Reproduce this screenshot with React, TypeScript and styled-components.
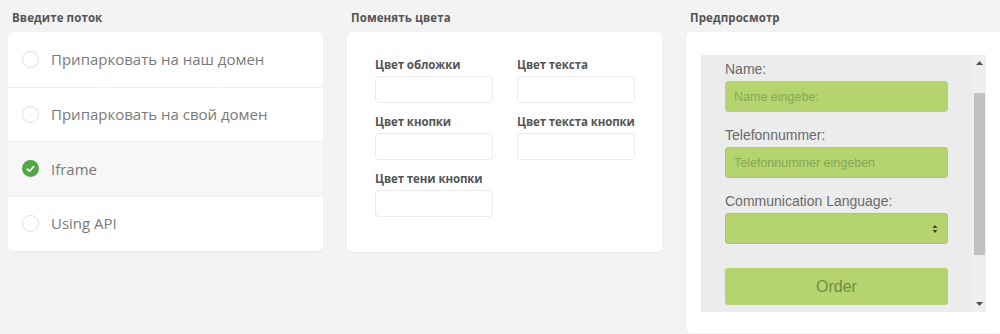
import React from "react";
import styled, { createGlobalStyle } from "styled-components";

const Global = createGlobalStyle`
  html, body { margin: 0; padding: 0; background: #f3f3f3; }
  body { font-family: "Open Sans", "Noto Sans", sans-serif; overflow: hidden; }
`;

const Page = styled.div`
  display: grid;
  grid-template-columns: 315px 315px 316px;
  column-gap: 24px;
  padding: 10px 0 0 8px;
  width: 1010px;
`;

const Column = styled.section`
  display: flex;
  flex-direction: column;
`;

const Heading = styled.h3`
  margin: 0 0 7px 4px;
  font-size: 11.5px;
  font-weight: 700;
  color: #555;
  line-height: 15px;
  letter-spacing: 0.1px;
`;

const Card = styled.div<{ $height: number }>`
  background: #fff;
  border-radius: 5px;
  height: ${(p) => p.$height}px;
  box-shadow: 0 1px 2px rgba(0, 0, 0, 0.05);
  box-sizing: border-box;
  overflow: hidden;
`;

const OptionList = styled.ul`
  list-style: none;
  margin: 0;
  padding: 0;
`;

const Option = styled.li<{ $active?: boolean }>`
  display: flex;
  align-items: center;
  gap: 12px;
  height: 54.5px;
  padding-left: 14px;
  box-sizing: border-box;
  background: ${(p) => (p.$active ? "#f7f7f7" : "#fff")};
  border-top: 1px solid #efefef;
  &:first-child { border-top: none; }
  font-size: 15px;
  color: #7a7a7a;
`;

const Radio = styled.span<{ $checked?: boolean }>`
  width: 17px;
  height: 17px;
  border-radius: 50%;
  box-sizing: border-box;
  border: ${(p) => (p.$checked ? "none" : "1.5px solid #dedede")};
  background: ${(p) => (p.$checked ? "#56a548" : "#fff")};
  display: flex;
  align-items: center;
  justify-content: center;
  flex-shrink: 0;
`;

const ColorGrid = styled.div`
  display: grid;
  grid-template-columns: 118px 118px;
  column-gap: 24px;
  row-gap: 11px;
  padding: 25px 0 0 28px;
`;

const Field = styled.label`
  display: flex;
  flex-direction: column;
  gap: 4px;
`;

const FieldLabel = styled.span`
  font-size: 11.5px;
  font-weight: 700;
  color: #555;
  line-height: 15px;
  white-space: nowrap;
  letter-spacing: -0.1px;
`;

const ColorInput = styled.div`
  height: 27px;
  border: 1px solid #ebebeb;
  border-radius: 4px;
  box-sizing: border-box;
  background: #fff;
`;

const PreviewFrame = styled.div`
  margin: 23px 0 0 15px;
  width: 285px;
  height: 257px;
  background: #ececec;
  display: flex;
`;

const FormBody = styled.div`
  flex: 1;
  padding: 6px 24px 0 24px;
  display: flex;
  flex-direction: column;
  font-family: "Liberation Sans", "Open Sans", sans-serif;
`;

const PLabel = styled.div`
  font-size: 14px;
  color: #6a6a6a;
  line-height: 17px;
  margin-bottom: 3px;
`;

const PInput = styled.div<{ $focus?: boolean }>`
  height: 31px;
  background: #b5d36f;
  border: 1px solid ${(p) => (p.$focus ? "#a9cfc0" : "#acc96a")};
  border-radius: 3px;
  box-sizing: border-box;
  display: flex;
  align-items: center;
  padding: 0 8px;
  font-size: 12.5px;
  color: #86a856;
  margin-bottom: 15px;
  position: relative;
`;

const SelectArrows = styled.span`
  position: absolute;
  right: 9px;
  top: 50%;
  transform: translateY(-50%);
  display: flex;
`;

const OrderButton = styled.div`
  margin-top: 9px;
  height: 37px;
  background: #b5d36f;
  border-radius: 3px;
  display: flex;
  align-items: center;
  justify-content: center;
  font-size: 16px;
  color: #6e8c45;
`;

const Scrollbar = styled.div`
  width: 14px;
  background: #efefef;
  display: flex;
  flex-direction: column;
  align-items: center;
`;

const ScrollArrow = styled.div`
  height: 16px;
  display: flex;
  align-items: center;
  justify-content: center;
`;

const Thumb = styled.div`
  width: 11px;
  height: 162px;
  margin-top: 22px;
  background: #c1c1c1;
`;

const Spacer = styled.div`
  flex: 1;
`;

const options = [
  "Припарковать на наш домен",
  "Припарковать на свой домен",
  "Iframe",
  "Using API",
];

const colorFields = [
  "Цвет обложки",
  "Цвет текста",
  "Цвет кнопки",
  "Цвет текста кнопки",
  "Цвет тени кнопки",
];

export default function App() {
  return (
    <>
      <Global />
      <Page>
        <Column>
          <Heading>Введите поток</Heading>
          <Card $height={219}>
            <OptionList>
              {options.map((o, i) => (
                <Option key={o} $active={i === 2}>
                  <Radio $checked={i === 2}>
                    {i === 2 && (
                      <svg width="9" height="8" viewBox="0 0 9 8">
                        <path d="M1.3 4.2 L3.5 6.2 L7.7 1.6" fill="none" stroke="#fff" strokeWidth="1.7" strokeLinecap="round" strokeLinejoin="round" />
                      </svg>
                    )}
                  </Radio>
                  {o}
                </Option>
              ))}
            </OptionList>
          </Card>
        </Column>
        <Column>
          <Heading>Поменять цвета</Heading>
          <Card $height={220}>
            <ColorGrid>
              {colorFields.map((f) => (
                <Field key={f}>
                  <FieldLabel>{f}</FieldLabel>
                  <ColorInput />
                </Field>
              ))}
            </ColorGrid>
          </Card>
        </Column>
        <Column>
          <Heading>Предпросмотр</Heading>
          <Card $height={301}>
            <PreviewFrame>
              <FormBody>
                <PLabel>Name:</PLabel>
                <PInput $focus>Name eingebe:</PInput>
                <PLabel>Telefonnummer:</PLabel>
                <PInput>Telefonnummer eingeben</PInput>
                <PLabel>Communication Language:</PLabel>
                <PInput>
                  <SelectArrows>
                    <svg width="6" height="10" viewBox="0 0 6 10">
                      <path d="M0.5 4 L3 1 L5.5 4 Z M0.5 6 L3 9 L5.5 6 Z" fill="#3f4a2a" />
                    </svg>
                  </SelectArrows>
                </PInput>
                <OrderButton>Order</OrderButton>
              </FormBody>
              <Scrollbar>
                <ScrollArrow>
                  <svg width="7" height="4" viewBox="0 0 7 4"><path d="M0 4 L3.5 0 L7 4 Z" fill="#505050" /></svg>
                </ScrollArrow>
                <Thumb />
                <Spacer />
                <ScrollArrow>
                  <svg width="7" height="4" viewBox="0 0 7 4"><path d="M0 0 L3.5 4 L7 0 Z" fill="#505050" /></svg>
                </ScrollArrow>
              </Scrollbar>
            </PreviewFrame>
          </Card>
        </Column>
      </Page>
    </>
  );
}
